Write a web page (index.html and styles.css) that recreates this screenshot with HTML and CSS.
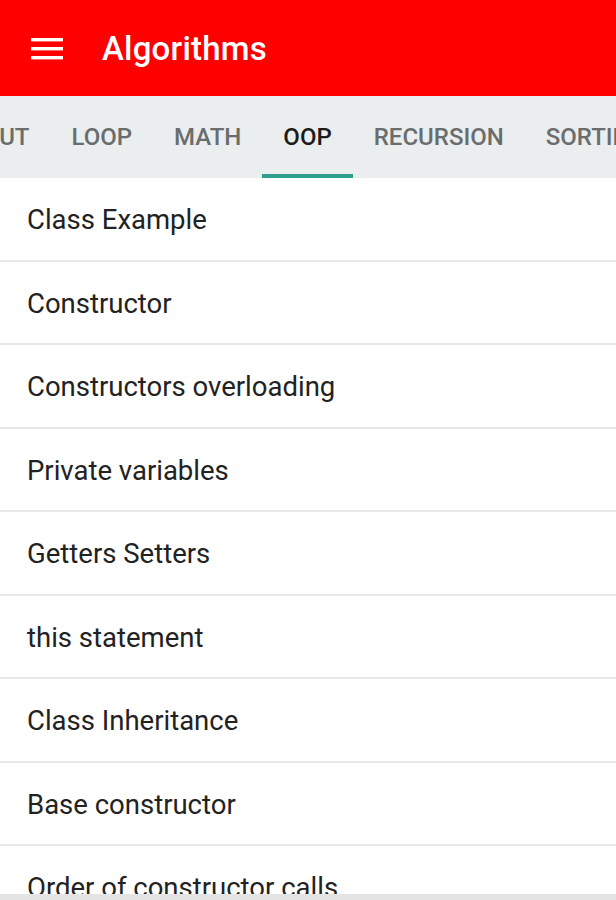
FILE: index.html
```html
<!DOCTYPE html>
<html lang="en">
<head>
    <meta charset="UTF-8">
    <meta name="viewport" content="width=device-width, initial-scale=1.0">
    <title>Algorithms</title>
    <link rel="stylesheet" href="styles.css">
</head>
<body>
    <div class="app">
        <header class="toolbar">
            <svg class="menu-icon" width="34" height="24" viewBox="0 0 34 24">
                <rect x="0" y="1" width="32" height="3.4" fill="#fff"/>
                <rect x="0" y="10" width="32" height="3.4" fill="#fff"/>
                <rect x="0" y="19" width="32" height="3.4" fill="#fff"/>
            </svg>
            <h1 class="title">Algorithms</h1>
        </header>

        <nav class="tabs">
            <div class="tab-strip">
                <div class="tab">Input</div>
                <div class="tab">Loop</div>
                <div class="tab">Math</div>
                <div class="tab active">OOP</div>
                <div class="tab">Recursion</div>
                <div class="tab">Sorting</div>
            </div>
        </nav>

        <ul class="list">
            <li class="list-item">Class Example</li>
            <li class="list-item">Constructor</li>
            <li class="list-item">Constructors overloading</li>
            <li class="list-item">Private variables</li>
            <li class="list-item">Getters Setters</li>
            <li class="list-item">this statement</li>
            <li class="list-item">Class Inheritance</li>
            <li class="list-item">Base constructor</li>
            <li class="list-item">Order of constructor calls</li>
        </ul>
        <div class="bottom-bar"></div>
    </div>
</body>
</html>
```

FILE: styles.css
```css
body {
    margin: 0;
    font-family: Roboto, 'Noto Sans', Arial, sans-serif;
    background: #fff;
    color: #222;
}

.app {
    position: relative;
    width: 616px;
    height: 900px;
    overflow: hidden;
}

.toolbar {
    height: 96px;
    background: #fe0000;
    display: flex;
    align-items: center;
    padding-left: 31px;
    box-sizing: border-box;
}

.menu-icon {
    display: block;
    margin-top: 1px;
}

.title {
    margin: 0 0 0 37px;
    color: #fff;
    font-size: 33px;
    font-weight: 500;
    letter-spacing: 0.2px;
}

.tabs {
    height: 82px;
    background: #eaeeee;
    overflow: hidden;
}

.tab-strip {
    display: flex;
    height: 100%;
    margin-left: -61px;
}

.tab {
    position: relative;
    flex: none;
    display: flex;
    align-items: center;
    padding: 0 21px;
    font-size: 24px;
    font-weight: 500;
    text-transform: uppercase;
    color: #6a6d6d;
    white-space: nowrap;
}

.tab.active {
    color: #1c1c1c;
}

.tab.active::after {
    content: '';
    position: absolute;
    left: 0;
    right: 0;
    bottom: 0;
    height: 4px;
    background: #2e9e8e;
}

.list {
    list-style: none;
    margin: 0;
    padding: 0;
}

.list-item {
    height: 81.5px;
    display: flex;
    align-items: center;
    padding: 2px 0 0 27px;
    box-sizing: border-box;
    height: 83.5px;
    font-size: 27.5px;
    color: #222;
    border-bottom: 2px solid #e8e8e8;
}

.bottom-bar {
    position: absolute;
    left: 0;
    right: 0;
    bottom: 0;
    height: 6px;
    background: #e4e4e4;
}
```
